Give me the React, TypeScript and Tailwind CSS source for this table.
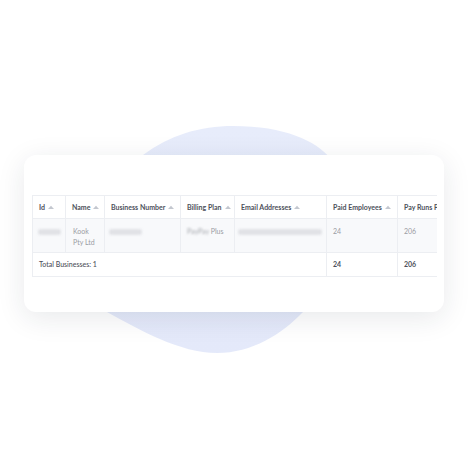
import React from 'react';

const SortArrow = () => (
  <svg width="6" height="4" viewBox="0 0 6 4" className="inline-block ml-[3px] mb-[1px]">
    <path d="M0 4 L3 0.8 L6 4 Z" fill="#c3c7cf" />
  </svg>
);

const Blur = ({ w }: { w: number }) => (
  <div
    className="h-[6px] rounded-[3px] bg-[#e1e2e6] blur-[0.8px] mt-[3px]"
    style={{ width: w }}
  />
);

const columns = ['Id', 'Name', 'Business Number', 'Billing Plan', 'Email Addresses', 'Paid Employees', 'Pay Runs Processed'];

export default function App() {
  return (
    <div className="relative w-[468px] h-[468px] bg-white overflow-hidden font-['Lato',sans-serif]">
      {/* background blob */}
      <svg className="absolute inset-0" width="468" height="468" viewBox="0 0 468 468">
        <defs>
          <linearGradient id="blob" x1="0" y1="0" x2="0" y2="1">
            <stop offset="0" stopColor="#e7ecfb" />
            <stop offset="1" stopColor="#e4e9fa" />
          </linearGradient>
        </defs>
        <path
          d="M233 126 C285 126 316 141 330 158 C362 200 346 272 303 312 C282 334 252 353 217 353 C180 353 140 330 107 312 C68 290 92 200 143 155 C170 135 200 126 233 126 Z"
          fill="url(#blob)"
        />
      </svg>

      <div className="relative pt-[155px] px-[24px]">
        <div className="w-[420px] h-[157px] bg-white rounded-[12px] shadow-[0_6px_28px_rgba(30,35,60,0.10)] pt-[40px] pl-[8px] pr-[7px]">
          <div className="w-[405px] overflow-hidden">
            <table className="table-fixed border-collapse w-[455px] text-[7px] leading-[11px]">
              <colgroup>
                <col className="w-[33px]" />
                <col className="w-[39px]" />
                <col className="w-[76px]" />
                <col className="w-[54px]" />
                <col className="w-[92px]" />
                <col className="w-[71px]" />
                <col className="w-[90px]" />
              </colgroup>
              <thead>
                <tr className="h-[23px] border border-[#eceef2]">
                  {columns.map((c) => (
                    <th
                      key={c}
                      className="px-[6px] text-left font-bold text-[#4d505a] whitespace-nowrap overflow-hidden border-r border-[#eceef2]"
                    >
                      {c}
                      <SortArrow />
                    </th>
                  ))}
                </tr>
              </thead>
              <tbody>
                <tr className="h-[34px] bg-[#f8f9fb] border border-[#eceef2] align-top text-[#9a9ca3]">
                  <td className="px-[5px] pt-[7px] border-r border-[#eceef2]">
                    <Blur w={23} />
                  </td>
                  <td className="px-[7px] pt-[7px] border-r border-[#eceef2]">
                    Kook
                    <br />
                    Pty Ltd
                  </td>
                  <td className="px-[4px] pt-[7px] border-r border-[#eceef2]">
                    <Blur w={33} />
                  </td>
                  <td className="px-[6px] pt-[7px] border-r border-[#eceef2] whitespace-nowrap">
                    <span className="blur-[1px] text-[#a4a6ac]">PayPay</span> Plus
                  </td>
                  <td className="px-[3px] pt-[7px] border-r border-[#eceef2]">
                    <Blur w={84} />
                  </td>
                  <td className="px-[6px] pt-[7px] border-r border-[#eceef2]">24</td>
                  <td className="px-[6px] pt-[7px] border-r border-[#eceef2]">206</td>
                </tr>
                <tr className="h-[24px] border border-[#eceef2] text-[#4d505a]">
                  <td colSpan={5} className="px-[6px] border-r border-[#eceef2] font-medium">
                    Total Businesses: 1
                  </td>
                  <td className="px-[6px] border-r border-[#eceef2] font-bold">24</td>
                  <td className="px-[6px] border-r border-[#eceef2] font-bold">206</td>
                </tr>
              </tbody>
            </table>
          </div>
        </div>
      </div>
    </div>
  );
}
